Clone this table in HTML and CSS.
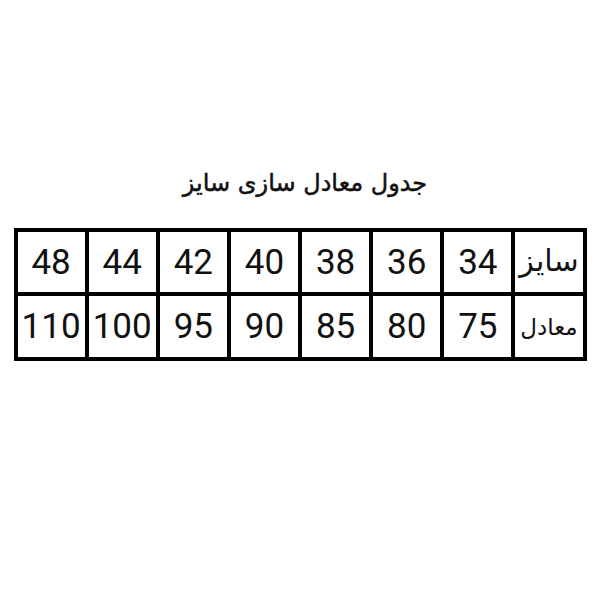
FILE: index.html
```html
<!DOCTYPE html>
<html lang="fa" dir="rtl">
<head>
<meta charset="utf-8">
<link rel="stylesheet" href="styles.css">
</head>
<body>
<div class="page">
  <h1 class="title">جدول معادل سازی سایز</h1>
  <div class="table">
    <div class="cell label">سایز</div>
    <div class="cell">34</div>
    <div class="cell">36</div>
    <div class="cell">38</div>
    <div class="cell">40</div>
    <div class="cell">42</div>
    <div class="cell">44</div>
    <div class="cell">48</div>
    <div class="cell label small">معادل</div>
    <div class="cell">75</div>
    <div class="cell">80</div>
    <div class="cell">85</div>
    <div class="cell">90</div>
    <div class="cell">95</div>
    <div class="cell">100</div>
    <div class="cell">110</div>
  </div>
</div>
</body>
</html>
```
FILE: styles.css
```css
html, body {
  margin: 0;
  padding: 0;
  background: #fff;
}
.page {
  width: 600px;
  height: 600px;
  padding-top: 168px;
  box-sizing: border-box;
  display: flex;
  flex-direction: column;
  align-items: center;
}
.title {
  margin: 0 0 30px 0;
  font-family: "DejaVu Sans", sans-serif;
  font-weight: normal;
  font-size: 24px;
  line-height: 30px;
  color: #111;
  padding-left: 10px;
  -webkit-text-stroke: 0.5px #111;
}
.table {
  width: 573px;
  display: grid;
  grid-template-columns: repeat(8, 1fr);
  grid-template-rows: 60px 61px;
  gap: 4px;
  padding: 4px;
  box-sizing: border-box;
  background: #000;
  direction: rtl;
}
.cell {
  background: #fff;
  display: flex;
  align-items: center;
  justify-content: center;
  font-family: Roboto, sans-serif;
  font-size: 35px;
  color: #111;
  direction: ltr;
}
.label {
  font-family: "DejaVu Sans", sans-serif;
  font-size: 30px;
  direction: rtl;
  padding-bottom: 4px;
}
.label.small {
  font-size: 23px;
  padding-bottom: 0;
}
```
